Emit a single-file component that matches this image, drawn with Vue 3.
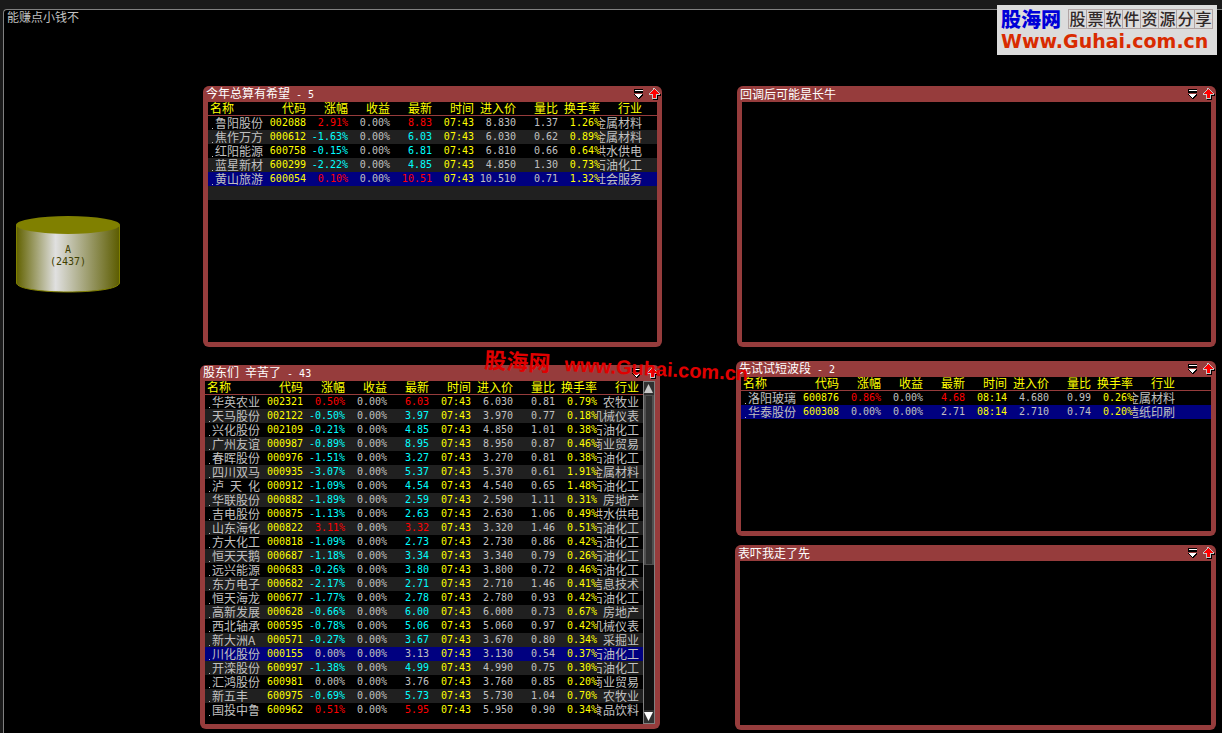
<script setup>
const columns = ['名称', '代码', '涨幅', '收益', '最新', '时间', '进入价', '量比', '换手率', '行业']

// name, code, change, latest, entry, volume ratio, turnover, industry
const parse = (text, time, selected) =>
  text.trim().split('\n').map((line) => {
    const [name, code, change, latest, entry, ratio, turnover, industry] = line.trim().split('|')
    const value = parseFloat(change)
    return {
      name, code, change, latest, entry, ratio, turnover, industry, time,
      trend: value > 0 ? 'up' : value < 0 ? 'down' : 'flat',
      selected: code === selected,
    }
  })

const hopeful = parse(`
鲁阳股份|002088|2.91%|8.83|8.830|1.37|1.26%|金属材料
焦作万方|000612|-1.63%|6.03|6.030|0.62|0.89%|金属材料
红阳能源|600758|-0.15%|6.81|6.810|0.66|0.64%|供水供电
蓝星新材|600299|-2.22%|4.85|4.850|1.30|0.73%|石油化工
黄山旅游|600054|0.10%|10.51|10.510|0.71|1.32%|社会服务`, '07:43', '600054')

const holders = parse(`
华英农业|002321|0.50%|6.03|6.030|0.81|0.79%|农牧业
天马股份|002122|-0.50%|3.97|3.970|0.77|0.18%|机械仪表
兴化股份|002109|-0.21%|4.85|4.850|1.01|0.38%|石油化工
广州友谊|000987|-0.89%|8.95|8.950|0.87|0.46%|商业贸易
春晖股份|000976|-1.51%|3.27|3.270|0.81|0.38%|石油化工
四川双马|000935|-3.07%|5.37|5.370|0.61|1.91%|金属材料
泸\u2002天\u2002化|000912|-1.09%|4.54|4.540|0.65|1.48%|石油化工
华联股份|000882|-1.89%|2.59|2.590|1.11|0.31%|房地产
吉电股份|000875|-1.13%|2.63|2.630|1.06|0.49%|供水供电
山东海化|000822|3.11%|3.32|3.320|1.46|0.51%|石油化工
方大化工|000818|-1.09%|2.73|2.730|0.86|0.42%|石油化工
恒天天鹅|000687|-1.18%|3.34|3.340|0.79|0.26%|石油化工
远兴能源|000683|-0.26%|3.80|3.800|0.72|0.46%|石油化工
东方电子|000682|-2.17%|2.71|2.710|1.46|0.41%|信息技术
恒天海龙|000677|-1.77%|2.78|2.780|0.93|0.42%|石油化工
高新发展|000628|-0.66%|6.00|6.000|0.73|0.67%|房地产
西北轴承|000595|-0.78%|5.06|5.060|0.97|0.42%|机械仪表
新大洲A|000571|-0.27%|3.67|3.670|0.80|0.34%|采掘业
川化股份|000155|0.00%|3.13|3.130|0.54|0.37%|石油化工
开滦股份|600997|-1.38%|4.99|4.990|0.75|0.30%|石油化工
汇鸿股份|600981|0.00%|3.76|3.760|0.85|0.20%|商业贸易
新五丰|600975|-0.69%|5.73|5.730|1.04|0.70%|农牧业
国投中鲁|600962|0.51%|5.95|5.950|0.90|0.34%|食品饮料`, '07:43', '000155')

const shortTerm = parse(`
洛阳玻璃|600876|0.86%|4.68|4.680|0.99|0.26%|金属材料
华泰股份|600308|0.00%|2.71|2.710|0.74|0.20%|造纸印刷`, '08:14', '600308')

const panels = [
  { id: 'hopeful', title: '今年总算有希望', count: 5, rows: hopeful, spare: true },
  { id: 'pullback', title: '回调后可能是长牛', rows: [] },
  { id: 'holders', title: '股东们\u2002辛苦了', count: 43, rows: holders, scroll: true },
  { id: 'short-term', title: '先试试短波段', count: 2, rows: shortTerm },
  { id: 'scared', title: '表吓我走了先', rows: [] },
]
</script>

<template>
  <div class="page">
    <main class="canvas">
      <h1 class="canvas-title">能赚点小钱不</h1>
    </main>

    <svg class="pool" viewBox="0 0 104 77" role="img" aria-label="A (2437)">
      <defs>
        <linearGradient id="metal">
          <stop offset="0" stop-color="#626200" />
          <stop offset="0.38" stop-color="#e0e0e0" />
          <stop offset="1" stop-color="#5c5c00" />
        </linearGradient>
      </defs>
      <path d="M.5 9V67C2 79 102 79 103.500 67V9z" fill="url(#metal)" stroke="#808000" />
      <ellipse cx="52" cy="9" rx="52" ry="9" fill="#808000" />
      <text x="52" y="37">A</text>
      <text x="52" y="49">(2437)</text>
    </svg>

    <section v-for="p in panels" :key="p.id" class="panel" :class="p.id">
      <header class="bar">
        <h2>{{ p.title }}<span v-if="p.count" class="count"> - {{ p.count }}</span></h2>
        <button type="button" aria-label="菜单">
          <svg width="9" height="10" viewBox="0 0 9 10" shape-rendering="crispEdges">
            <path d="M0 0H9V4H0zM0 5H9V6L5 10H4L0 6z" fill="#000" />
            <path d="M1 1H9V2H1zM1 5H8V6H7V7H6V8H5V9H4V8H3V7H2V6H1z" fill="#fff" />
          </svg>
        </button>
        <button type="button" aria-label="展开">
          <svg width="12" height="12" viewBox="0 0 12 12" shape-rendering="crispEdges">
            <path d="M5 1H7V2H8V3H9V4H10V5H11V6H12V8H9V12H4V11H3V7H5z" fill="#000" />
            <path d="M4 0H6V1H7V2H8V3H9V4H10V5H11V7H8V11H3V7H0V5H1V4H2V3H3V2H4z" fill="#c8c8c8" />
            <path d="M5 1H6V2H7V3H8V4H9V5H10V6H7V10H4V6H1V5H2V4H3V3H4V2H5z" fill="#f00" />
          </svg>
        </button>
      </header>
      <div class="body">
        <table v-if="p.rows.length">
          <colgroup>
            <col class="c-name" />
            <col v-for="n in 9" :key="n" class="c-value" />
            <col />
          </colgroup>
          <thead>
            <tr>
              <th v-for="c in columns" :key="c" scope="col"><div>{{ c }}</div></th>
              <td></td>
            </tr>
          </thead>
          <tbody>
            <tr v-for="r in p.rows" :key="r.code" :class="{ selected: r.selected }">
              <td class="name">{{ r.name }}</td>
              <td class="num yellow">{{ r.code }}</td>
              <td class="num" :class="r.trend">{{ r.change }}</td>
              <td class="num">0.00%</td>
              <td class="num" :class="r.trend">{{ r.latest }}</td>
              <td class="num yellow">{{ r.time }}</td>
              <td class="num">{{ r.entry }}</td>
              <td class="num">{{ r.ratio }}</td>
              <td class="num yellow">{{ r.turnover }}</td>
              <td class="industry"><div>{{ r.industry }}</div></td>
              <td></td>
            </tr>
            <tr v-if="p.spare"><td colspan="11"></td></tr>
          </tbody>
        </table>
        <div v-if="p.scroll" class="scroll">
          <button type="button" aria-label="向上滚动">
            <svg width="9" height="9" viewBox="0 0 9 9"><path d="M4.500 0 9 9H0z" fill="#c8c8c8" /></svg>
          </button>
          <div class="thumb"></div>
          <button type="button" aria-label="向下滚动">
            <svg width="9" height="9" viewBox="0 0 9 9"><path d="M0 0H9L4.500 9z" fill="#fff" /></svg>
          </button>
        </div>
      </div>
    </section>

    <div class="mark mark-name">股海网</div>
    <div class="mark mark-site">www.Guhai.com.cn</div>

    <aside class="logo">
      <div class="logo-top">
        <strong>股海网</strong>
        <span class="slogan"><i v-for="ch in '股票软件资源分享'" :key="ch">{{ ch }}</i></span>
      </div>
      <div class="logo-site">Www.Guhai.com.cn</div>
    </aside>
  </div>
</template>

<style>
body {
  background: #1a1a1a;
}
</style>

<style scoped>
.page {
  position: relative;
  display: flex;
  min-height: 100vh;
  box-sizing: border-box;
  padding: 9px 0 0 3px;
  overflow: hidden;
  font: 12px/14px "Noto Sans CJK SC", sans-serif;
  color: #c0c0c0;
}
.canvas {
  flex: 1;
  background: #000;
  border: solid #808080;
  border-width: 1px 0 0 1px;
  border-top-left-radius: 4px;
}
h1, h2 {
  margin: 0;
  font-size: 12px;
  font-weight: 400;
}
.canvas-title {
  padding-left: 3px;
}
button {
  display: flex;
  padding: 0;
  border: 0;
  background: none;
}
.pool {
  position: absolute;
  left: 16px;
  top: 216px;
  width: 104px;
}
.pool text {
  font: 10px "DejaVu Sans Mono", monospace;
  text-anchor: middle;
  fill: #404000;
}
.panel {
  position: absolute;
  display: flex;
  flex-direction: column;
  box-sizing: border-box;
  border: 5px solid #963c3c;
  border-top: 0;
  border-radius: 6px;
  background: #963c3c;
}
.hopeful {
  left: 16.61%;
  width: 37.56%;
  top: 86px;
  min-height: 261px;
}
.pullback {
  left: 60.31%;
  right: 6px;
  top: 86px;
  min-height: 261px;
}
.holders {
  left: 16.37%;
  width: 37.64%;
  top: 365px;
  min-height: 364px;
}
.short-term {
  left: 60.23%;
  right: 6px;
  top: 361px;
  min-height: 175px;
}
.scared {
  left: 60.15%;
  right: 6px;
  top: 545px;
  min-height: 185px;
}
.bar {
  display: flex;
  align-items: center;
  gap: 6px;
  height: 16px;
  margin: 0 -4px 0 -2px;
}
h2 {
  flex: 1;
  color: #fff;
  white-space: pre;
}
.count, .num {
  font-family: "DejaVu Sans Mono", monospace;
  font-size: 10px;
}
.body {
  flex: 1;
  display: flex;
  align-items: flex-start;
  background: #000;
}
table {
  flex: 1;
  width: 100%;
  table-layout: fixed;
  border-collapse: collapse;
}
.c-name {
  width: 56px;
}
.c-value {
  width: 42px;
}
tr {
  height: 14px;
}
th, td {
  padding: 0;
  text-align: right;
  white-space: nowrap;
  line-height: 14px;
}
thead tr {
  box-shadow: inset 0 -1px #963c3c;
}
th {
  font-weight: 400;
  color: #ff0;
}
th div {
  height: 14px;
  line-height: 12px;
}
th:first-child {
  padding-left: 2px;
  text-align: left;
}
tbody tr:nth-child(even) {
  background: #202020;
}
tbody tr.selected {
  background: #000080;
}
.name {
  position: relative;
  padding-left: 7px;
  text-align: left;
}
.name::before {
  content: "";
  position: absolute;
  left: 4px;
  bottom: 1px;
  width: 1px;
  height: 1px;
  background: #c0c0c0;
}
.industry div {
  display: flex;
  justify-content: flex-end;
  height: 14px;
  overflow: hidden;
}
.yellow {
  color: #ff0;
}
.up {
  color: #f00;
}
.down {
  color: #0ff;
}
.scroll {
  align-self: stretch;
  display: flex;
  flex-direction: column;
  box-sizing: border-box;
  width: 12px;
  border: 1px solid #808080;
  background: #101010;
}
.scroll button {
  justify-content: center;
  padding: 2px 0;
  background: #303030;
}
.thumb {
  height: 168px;
  margin-bottom: auto;
  background: #303030;
  border: solid #505050;
  border-width: 1px 2px;
}
.mark {
  position: absolute;
  color: #e00000;
  font-weight: 700;
  white-space: nowrap;
  transform: rotate(3deg);
  transform-origin: 0 100%;
}
.mark-name {
  left: 484px;
  top: 346px;
  font-size: 22px;
  line-height: 24px;
}
.mark-site {
  left: 564px;
  top: 352px;
  font: 700 20px/24px "Liberation Sans", sans-serif;
}
.logo {
  position: absolute;
  top: 5px;
  right: 5px;
  box-sizing: border-box;
  width: 220px;
  height: 50px;
  padding: 3px 4px;
  background: #dcdcdc;
  color: #d92b00;
}
.logo-top {
  display: flex;
  align-items: center;
  justify-content: space-between;
  height: 22px;
}
strong {
  color: #0000d8;
  font-size: 20px;
  font-weight: 900;
  line-height: 22px;
}
.slogan {
  display: flex;
  height: 18px;
  border: solid #b0a4a4;
  border-width: 1px 0 1px 1px;
  color: #302828;
  font: 500 16px/16px "Noto Sans CJK SC", sans-serif;
}
.slogan i {
  width: 17px;
  font-style: normal;
  text-align: center;
  border-right: 1px solid #b0a4a4;
  background: linear-gradient(#e4c8c8, #e4c8c8) center / 100% 1px no-repeat;
}
.logo-site {
  font: 700 19px/22px "DejaVu Sans", sans-serif;
  white-space: nowrap;
}
</style>
